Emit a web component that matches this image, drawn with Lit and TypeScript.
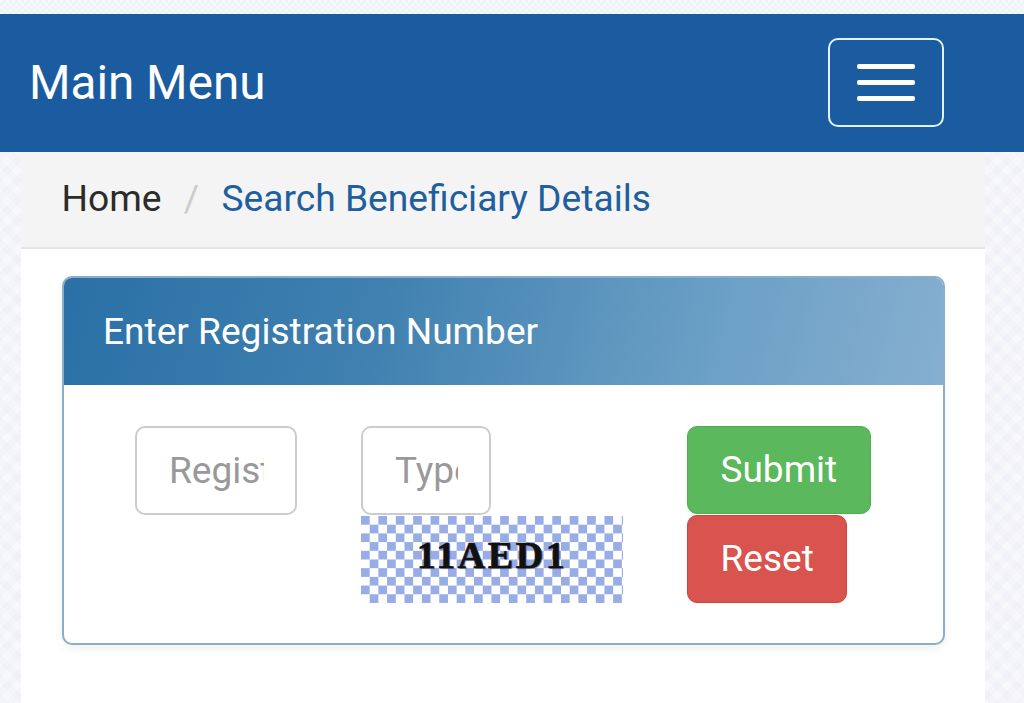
import { LitElement, html, css } from "lit";
import { customElement } from "lit/decorators.js";

@customElement("app-root")
export class AppRoot extends LitElement {
  static styles = css`
    :host {
      display: block;
      height: 703px;
      overflow: hidden;
      font-family: Roboto, "Liberation Sans", sans-serif;
      background-color: #f8f8fb;
      background-image:
        repeating-linear-gradient(45deg, rgba(226, 228, 240, 0.2) 0 7px, transparent 7px 14px),
        repeating-linear-gradient(-45deg, rgba(226, 228, 240, 0.2) 0 7px, transparent 7px 14px);
    }
    * { box-sizing: border-box; }
    .strip {
      height: 14px;
      background-color: #f4fafb;
      background-image: conic-gradient(#ecf4f7 25%, transparent 0 50%, #ecf4f7 0 75%, transparent 0);
      background-size: 6px 6px;
    }
    .nav {
      height: 138px;
      background: #1a5c9f;
      display: flex;
      align-items: center;
      justify-content: space-between;
      padding: 0 80px 0 29px;
    }
    .brand {
      color: #fff;
      font-size: 47.6px;
      line-height: 54px;
    }
    .toggler {
      width: 116px;
      height: 89px;
      margin-bottom: 2px;
      border: 2px solid #e4f1fa;
      border-radius: 10px;
      background: transparent;
      display: flex;
      flex-direction: column;
      align-items: center;
      justify-content: center;
      gap: 11px;
      padding: 0;
    }
    .toggler span {
      display: block;
      width: 58px;
      height: 5px;
      border-radius: 2px;
      background: #fff;
    }
    .container {
      margin: 0 39px 0 21px;
      height: 551px;
      background: #fff;
    }
    .crumbs {
      height: 97px;
      background: #f4f4f5;
      border-bottom: 2px solid #e4e4e4;
      display: flex;
      align-items: center;
      padding: 0 40px 3px 40.5px;
      font-size: 37.2px;
    }
    .home { color: #2b2b2b; }
    .sep { color: #ccc; margin: 0 22.25px; }
    .current { color: #1f5f9e; }
    .panel {
      margin: 27px 40px 0 41px;
      height: 369px;
      border: 2px solid #8aadc9;
      border-radius: 10px;
      box-shadow: 0 4px 10px rgba(0, 0, 0, 0.06);
      background: #fff;
      overflow: hidden;
    }
    .head {
      height: 107px;
      background: linear-gradient(105deg, #2a70a6 0%, #3f80b0 35%, #6a9fc5 72%, #86afd0 100%);
      color: #fff;
      font-size: 37.1px;
      display: flex;
      align-items: center;
      padding: 0 39px;
    }
    .body {
      display: grid;
      grid-template-columns: 226px 326px auto;
      padding: 41px 0 0 71px;
    }
    input {
      display: block;
      height: 89px;
      border: 2px solid #cccccc;
      border-radius: 10px;
      padding: 0 31px 0 32px;
      font: 37px Roboto, "Liberation Sans", sans-serif;
      color: #333;
      background: #fff;
      outline: none;
    }
    input::placeholder { color: #999; opacity: 1; }
    .reg { width: 162px; }
    .cap { width: 130px; }
    .captcha {
      width: 262px;
      height: 87px;
      margin-top: 1px;
      padding-bottom: 9px;
      display: flex;
      align-items: center;
      justify-content: center;
      font: bold 38px "Liberation Serif", serif;
      letter-spacing: 2.6px;
      color: #111;
      -webkit-text-stroke: 0.6px #111;
      text-shadow: 1px 1px 1px rgba(40, 50, 110, 0.6);
      background-color: #fff;
      background-image: conic-gradient(#98ace6 25%, transparent 0 50%, #98ace6 0 75%, transparent 0);
      background-size: 17.4px 17.4px;
      background-position: 8.7px 0;
    }
    .actions {
      display: flex;
      flex-direction: column;
      align-items: flex-start;
    }
    button.btn {
      height: 88px;
      border-radius: 10px;
      padding: 0 32.5px 2px;
      color: #fff;
      font: 37px Roboto, "Liberation Sans", sans-serif;
    }
    .ok { background: #5cb85c; border: 1px solid #4cae4c; }
    .no { background: #d9534f; border: 1px solid #d43f3a; margin-top: 1px; }
  `;

  render() {
    return html`
      <div class="strip"></div>
      <header class="nav">
        <div class="brand">Main Menu</div>
        <button class="toggler" aria-label="Menu"><span></span><span></span><span></span></button>
      </header>
      <main class="container">
        <nav class="crumbs">
          <span class="home">Home</span><span class="sep">/</span><span class="current">Search Beneficiary Details</span>
        </nav>
        <section class="panel">
          <div class="head">Enter Registration Number</div>
          <div class="body">
            <div><input class="reg" placeholder="Registration Number" /></div>
            <div>
              <input class="cap" placeholder="Type Captcha" />
              <div class="captcha">11AED1</div>
            </div>
            <div class="actions">
              <button class="btn ok">Submit</button>
              <button class="btn no">Reset</button>
            </div>
          </div>
        </section>
      </main>
    `;
  }
}
